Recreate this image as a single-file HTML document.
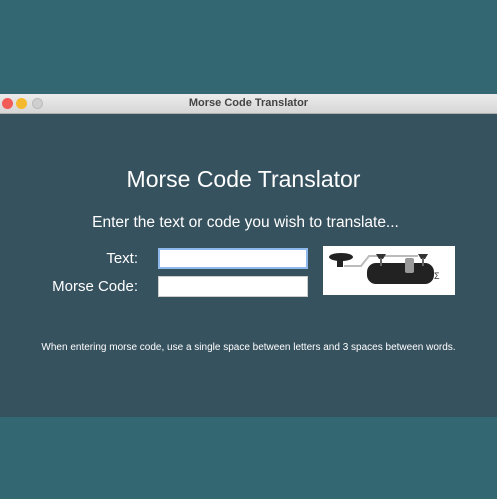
<!DOCTYPE html>
<html><head><style>
body{margin:0;width:497px;height:499px;background:#336873;position:relative;overflow:hidden;font-family:"Liberation Sans",sans-serif}
.tb{position:absolute;left:0;top:94px;width:497px;height:19px;background:linear-gradient(#ececec,#d6d6d6);border-bottom:1px solid #b0b0b0;text-align:center;font-size:11px;font-weight:bold;color:#444;line-height:19px}
.d{position:absolute;top:4px;width:11px;height:11px;border-radius:50%}
.win{position:absolute;left:0;top:114px;width:497px;height:303px;background:#37525f;color:#fff}
.t{position:absolute;width:100%;text-align:center}
.l{position:absolute;font-size:15px;text-align:right}
.in{position:absolute;background:#fff;border:1px solid #ccc;box-sizing:border-box}
</style></head><body>
<div class="tb"><div class="d" style="left:2px;background:#f35b57"></div><div class="d" style="left:16px;background:#f5b92e"></div><div class="d" style="left:32px;background:#cfcfcf;border:1px solid #bbb;box-sizing:border-box"></div>Morse Code Translator</div>
<div class="win">
<div class="t" style="top:52px;font-size:23px;left:-5px">Morse Code Translator</div>
<div class="t" style="top:100px;font-size:15.5px;left:-3px">Enter the text or code you wish to translate...</div>
<div class="l" style="right:359px;top:136px">Text:</div>
<div class="l" style="right:359px;top:164px">Morse Code:</div>
<div class="in" style="left:158px;top:134px;width:150px;height:21px;border:2px solid #8fb8ec"></div>
<div class="in" style="left:158px;top:162px;width:150px;height:21px"></div>
<div style="position:absolute;left:323px;top:132px;width:132px;height:49px;background:#fff">
<svg width="132" height="49" viewBox="0 0 132 49">
<ellipse cx="18" cy="11" rx="12" ry="4" fill="#222"/><rect x="14" y="11" width="6" height="10" fill="#222"/>
<path d="M21 20 H38 L46 10 H95" stroke="#bbb" stroke-width="2" fill="none"/>
<rect x="44" y="17" width="67" height="21" rx="9" fill="#222"/>
<path d="M53 8h10l-3 5h-4z M95 8h10l-3 5h-4z" fill="#333"/>
<rect x="57" y="12" width="2" height="8" fill="#666"/><rect x="99" y="12" width="2" height="8" fill="#666"/>
<rect x="82" y="12" width="9" height="15" rx="2" fill="#999"/>
<text x="111" y="33" font-size="9" fill="#333">Σ</text>
</svg></div>
<div class="t" style="top:228px;font-size:10px">When entering morse code, use a single space between letters and 3 spaces between words.</div>
</div>
</body></html>
